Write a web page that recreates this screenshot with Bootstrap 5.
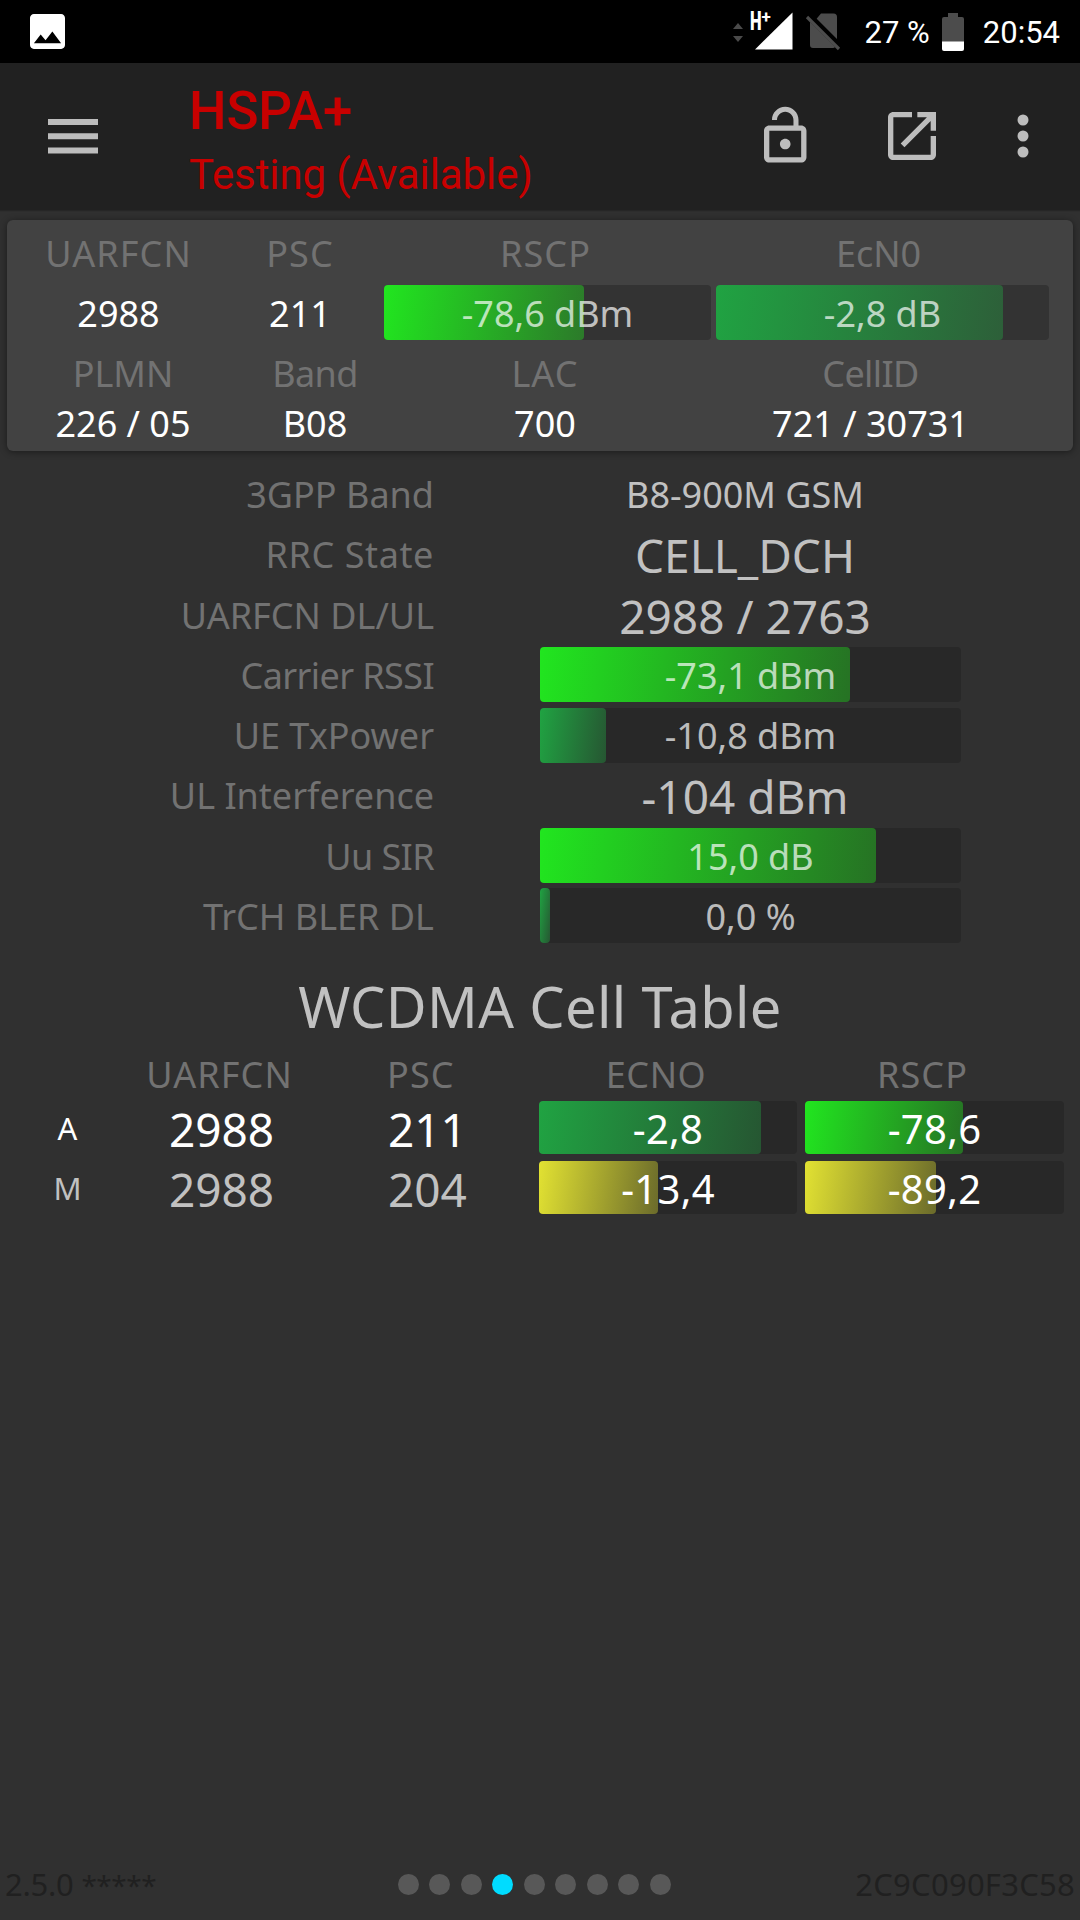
<!DOCTYPE html>
<html lang="en" data-bs-theme="dark">
<head>
<meta charset="utf-8">
<meta name="viewport" content="width=device-width, initial-scale=1">
<title>WCDMA Cell Table</title>
<link href="https://cdn.jsdelivr.net/npm/bootstrap@5.3.0/dist/css/bootstrap.min.css" rel="stylesheet">
<style>
  body { background: #303030; color: #c1c1c1; font-family: "Noto Sans", sans-serif; font-size: 36px; line-height: 1; height: 1920px; overflow: hidden; white-space: nowrap; }
  svg { display: block; flex: none; overflow: visible; }
  .statusbar { height: 63px; background: #000; color: #fff; font: 31px/63px Roboto, sans-serif; padding: 0 20px 0 30px; }
  .battery-pct { margin: 2px 12px 0 23px; }
  .clock { margin-left: 19px; padding-top: 1px; }
  .appbar { height: 147px; background: #212121; padding: 0 51px 0 48px; font-family: Roboto, sans-serif; color: #c80000; box-shadow: 0 1px 1px #262626; }
  .title-main { font-size: 53px; font-weight: 500; line-height: 62px; letter-spacing: -.2px; }
  .title-sub { font-size: 42px; line-height: 52px; letter-spacing: -.1px; margin-top: 7px; }
  .appbar-titles { margin-left: 91px; padding-top: 17px; }
  .icon-lock { margin-right: 81px; }
  .icon-open { margin-right: 81px; }
  .appbar-actions { padding-bottom: 2px; }

  .cell-card { margin: 10px 7px 0; height: 231px; background: #424242; border-radius: 6px; box-shadow: 0 1px 7px rgba(0,0,0,.45); padding-top: 2px; }
  .lbl { color: #727272; }
  .ls-wide { letter-spacing: 1.1px; }
  .ls-mid { letter-spacing: .6px; }
  .ls-tight { letter-spacing: -.6px; }
  .line-a { height: 62px; } .line-b { height: 57px; } .line-c { height: 64px; } .line-d { height: 35px; }
  .line-a > div, .line-b > div:not(.meter), .line-c > div, .line-d > div,
  .detail > div:not(.meter), .head-row > div, .cell-row > .big, .meter-text { padding-top: 2px; }
  .t1 { width: 223px; } .t2 { width: 140px; margin-right: 14px; } .t3 { width: 327px; margin-right: 5px; } .t4 { width: 333px; }
  .b1 { width: 232px; } .b2 { width: 152px; } .b3 { width: 308px; } .b4 { width: 343px; }

  .meter { position: relative; height: 55px; border-radius: 4px; background: #282828; display: flex; align-items: center; justify-content: center; }
  .cell-card .meter { background: #333; }
  .meter-fill { position: absolute; inset: 0 auto 0 0; border-radius: 4px; }
  .meter-text { position: relative; color: rgba(255,255,255,.7); }
  .fill-lime { background: linear-gradient(98deg, #21e61f, #267224); }
  .fill-green { background: linear-gradient(98deg, #20a342, #265632); }
  .fill-yellow { background: linear-gradient(98deg, #e2e232, #6b6b2b); }
  .cell-card .fill-lime { background: linear-gradient(98deg, #21e61f, #2c7a2a); }
  .cell-card .fill-green { background: linear-gradient(98deg, #20a342, #2d5f39); }

  .details { margin-top: 13px; }
  .detail { height: 60.25px; }
  .d-label { width: 434px; margin-right: 106px; text-align: right; }
  .d-value { width: 421px; text-align: center; }
  .d-plain { padding-right: 11px; }
  .big { font-size: 46px; }

  .section-title { font-size: 56px; font-weight: 400; line-height: 84px; padding: 18px 0 2px; margin: 0; letter-spacing: .35px; color: #c1c1c1; }
  .c-type { width: 135px; font-size: 31px; text-align: center; }
  .c-arfcn { width: 173px; text-align: center; }
  .c-psc { width: 151px; margin-left: 80px; }
  .c-m1 { width: 258px; margin-right: 8px; } .c-m2 { width: 259px; }
  .head-row { height: 48px; } .cell-row { height: 60px; }
  .head-row .c-psc { padding-left: 0; margin-left: 79px; margin-right: 1px; }
  .cell-row .meter { height: 53px; font-size: 40px; margin-top: -2px; }
  .cell-row .meter-text { color: #fff; letter-spacing: .3px; line-height: 48px; padding-top: 4px; }
  .head-meter { padding-right: 24px; }

  .footer { height: 70px; font-size: 31px; color: #202020; padding: 0 5px 2px; }
  .foot-left { width: 393px; letter-spacing: -.25px; }
  .stars { letter-spacing: -.45px; font-size: 28px; }
  .foot-right { letter-spacing: .25px; }
  .dots { gap: 10.450px; }
  .dot { width: 21px; height: 21px; border-radius: 50%; background: #585858; }
  .dot.on { background: #00dcff; }
</style>
</head>
<body class="d-flex flex-column">

<header class="statusbar d-flex align-items-center">
  <svg width="35" height="35" viewBox="3 3 18 18"><path fill="#fff" d="M21 19V5c0-1.100-.9-2-2-2H5c-1.100 0-2 .9-2 2v14c0 1.100.9 2 2 2h14c1.100 0 2-.9 2-2zM8.500 13.500l2.500 3.010L14.500 12l4.500 6H5l3.500-4.500z"/></svg>
  <svg class="ms-auto" width="110" height="39" viewBox="732 12 110 39">
    <path fill="#4a4a4a" d="M733 29l5-6 5 6zM733 36h10l-5 6z"/>
    <text x="0" y="0" transform="translate(750 30) scale(.66 1)" font-family="Roboto" font-weight="900" font-size="25" fill="#fff">H</text>
    <text x="0" y="0" transform="translate(761.500 22.500)" font-family="Roboto" font-weight="700" font-size="17" fill="#fff">+</text>
    <path fill="#fff" d="M792.500 12.500v37H755z"/>
    <path fill="#4c4c4c" d="M821 13.500h12.500q3.500 0 3.500 3.500v26.500L815.500 20zM810 22l25 25q-.5 1-2 1h-20q-3 0-3-3z"/>
    <path stroke="#000" stroke-width="4" d="M811.500 16.500l28 28"/>
    <path stroke="#4c4c4c" stroke-width="3.200" d="M807 17l32 32"/>
  </svg>
  <span class="battery-pct">27 %</span>
  <svg width="22" height="38" viewBox="0 0 22 38"><path fill="#4c4c4c" d="M6 0h10v4h4q2 0 2 2v23H0V6q0-2 2-2h4z"/><path fill="#fff" d="M0 28.500h22V36q0 2-2 2H2q-2 0-2-2z"/></svg>
  <span class="clock">20:54</span>
</header>

<nav class="appbar d-flex">
  <svg class="align-self-center" width="50" height="35" viewBox="0 0 50 35" fill="#bdbdbd"><path d="M0 0h50v6H0zM0 14.300h50v6H0zM0 28.600h50v6H0z"/></svg>
  <div class="appbar-titles">
    <div class="title-main">HSPA+</div>
    <div class="title-sub">Testing (Available)</div>
  </div>
  <div class="appbar-actions d-flex align-items-center ms-auto">
    <svg class="icon-lock" width="43" height="64" viewBox="4 0 16.200 24" fill="#bdbdbd"><path d="M12 17c1.100 0 2-.9 2-2s-.9-2-2-2-2 .9-2 2 .9 2 2 2zm6-9h-1V6c0-2.760-2.240-5-5-5S7 3.240 7 6h1.900c0-1.710 1.390-3.100 3.100-3.100 1.710 0 3.100 1.390 3.100 3.100v2H6c-1.100 0-2 .9-2 2v10c0 1.100.9 2 2 2h12c1.100 0 2-.9 2-2V10c0-1.100-.9-2-2-2zm0 12H6V10h12v10z"/></svg>
    <svg class="icon-open" width="48" height="48" viewBox="3 3 18 18" fill="#bdbdbd"><path d="M19 19H5V5h7V3H5c-1.110 0-2 .9-2 2v14c0 1.100.89 2 2 2h14c1.100 0 2-.9 2-2v-7h-2v7zM14 3v2h3.590l-9.830 9.830 1.410 1.410L19 6.410V10h2V3h-7z"/></svg>
    <svg width="12" height="44" viewBox="0 0 12 44" fill="#bdbdbd"><circle cx="6" cy="6" r="5.500"/><circle cx="6" cy="22" r="5.500"/><circle cx="6" cy="38" r="5.500"/></svg>
  </div>
</nav>

<section class="cell-card text-center text-white">
  <div class="line-a lbl d-flex align-items-center">
    <div class="t1 ls-wide">UARFCN</div><div class="t2 ls-wide">PSC</div><div class="t3 ls-wide pe-1">RSCP</div><div class="t4 pe-2">EcN0</div>
  </div>
  <div class="line-b d-flex align-items-center">
    <div class="t1">2988</div><div class="t2">211</div>
    <div class="t3 meter"><div class="meter-fill fill-lime" style="width:61.2%"></div><span class="meter-text">-78,6 dBm</span></div>
    <div class="t4 meter"><div class="meter-fill fill-green" style="width:86.2%"></div><span class="meter-text">-2,8 dB</span></div>
  </div>
  <div class="line-c lbl d-flex align-items-center">
    <div class="b1">PLMN</div><div class="b2 ls-tight">Band</div><div class="b3 ls-wide">LAC</div><div class="b4 ls-tight">CellID</div>
  </div>
  <div class="line-d d-flex align-items-center">
    <div class="b1">226 / 05</div><div class="b2">B08</div><div class="b3">700</div><div class="b4">721 / 30731</div>
  </div>
</section>

<section class="details">
  <div class="detail d-flex align-items-center"><div class="d-label lbl">3GPP Band</div><div class="d-value d-plain">B8-900M GSM</div></div>
  <div class="detail d-flex align-items-center"><div class="d-label lbl ls-mid">RRC State</div><div class="d-value d-plain big">CELL_DCH</div></div>
  <div class="detail d-flex align-items-center"><div class="d-label lbl">UARFCN DL/UL</div><div class="d-value d-plain big">2988 / 2763</div></div>
  <div class="detail d-flex align-items-center"><div class="d-label lbl ls-tight">Carrier RSSI</div><div class="d-value meter"><div class="meter-fill fill-lime" style="width:73.6%"></div><span class="meter-text">-73,1 dBm</span></div></div>
  <div class="detail d-flex align-items-center"><div class="d-label lbl">UE TxPower</div><div class="d-value meter"><div class="meter-fill fill-green" style="width:15.7%"></div><span class="meter-text">-10,8 dBm</span></div></div>
  <div class="detail d-flex align-items-center"><div class="d-label lbl">UL Interference</div><div class="d-value d-plain big">-104 dBm</div></div>
  <div class="detail d-flex align-items-center"><div class="d-label lbl ls-tight">Uu SIR</div><div class="d-value meter"><div class="meter-fill fill-lime" style="width:79.8%"></div><span class="meter-text">15,0 dB</span></div></div>
  <div class="detail d-flex align-items-center"><div class="d-label lbl">TrCH BLER DL</div><div class="d-value meter"><div class="meter-fill fill-green" style="width:2.4%"></div><span class="meter-text">0,0 %</span></div></div>
</section>

<section>
  <h2 class="section-title text-center">WCDMA Cell Table</h2>
  <div class="head-row lbl d-flex align-items-center">
    <div class="c-type"></div><div class="c-arfcn ls-wide pe-1">UARFCN</div><div class="c-psc ls-wide">PSC</div>
    <div class="c-m1 head-meter text-center ls-mid">ECNO</div><div class="c-m2 head-meter text-center ls-wide">RSCP</div>
  </div>
  <div class="cell-row d-flex align-items-center text-white">
    <div class="c-type">A</div><div class="c-arfcn big">2988</div><div class="c-psc big">211</div>
    <div class="c-m1 meter"><div class="meter-fill fill-green" style="width:86.1%"></div><span class="meter-text">-2,8</span></div>
    <div class="c-m2 meter"><div class="meter-fill fill-lime" style="width:61%"></div><span class="meter-text">-78,6</span></div>
  </div>
  <div class="cell-row d-flex align-items-center">
    <div class="c-type">M</div><div class="c-arfcn big">2988</div><div class="c-psc big">204</div>
    <div class="c-m1 meter"><div class="meter-fill fill-yellow" style="width:46.1%"></div><span class="meter-text">-13,4</span></div>
    <div class="c-m2 meter"><div class="meter-fill fill-yellow" style="width:50.6%"></div><span class="meter-text">-89,2</span></div>
  </div>
</section>

<footer class="footer d-flex align-items-center mt-auto">
  <div class="foot-left">2.5.0 <span class="stars">*****</span></div>
  <div class="dots d-flex">
    <span class="dot"></span><span class="dot"></span><span class="dot"></span><span class="dot on"></span><span class="dot"></span><span class="dot"></span><span class="dot"></span><span class="dot"></span><span class="dot"></span>
  </div>
  <div class="foot-right ms-auto">2C9C090F3C58</div>
</footer>

<script src="https://cdn.jsdelivr.net/npm/bootstrap@5.3.0/dist/js/bootstrap.bundle.min.js"></script>
</body>
</html>
